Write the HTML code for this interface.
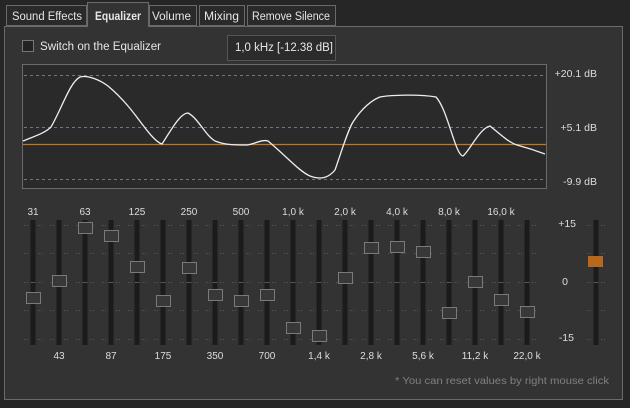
<!DOCTYPE html>
<html><head><meta charset="utf-8"><style>
html,body{margin:0;padding:0;background:#262626;width:630px;height:408px;overflow:hidden}
svg{display:block;font-family:"Liberation Sans",sans-serif}
</style></head><body>
<svg width="630" height="408" viewBox="0 0 630 408" xmlns="http://www.w3.org/2000/svg">
<rect x="4.5" y="26.5" width="618" height="373" fill="#333" stroke="#6a6a6a"/>
<g stroke="#6a6a6a">
<rect x="6.5" y="5.5" width="80" height="20" fill="#2a2a2a"/>
<rect x="149.5" y="5.5" width="47" height="20" fill="#2a2a2a"/>
<rect x="199.5" y="5.5" width="45" height="20" fill="#2a2a2a"/>
<rect x="247.5" y="5.5" width="88" height="20" fill="#2a2a2a"/>
<path d="M87.5 27V2.5H148.5V27" fill="#333"/>
</g>
<g font-size="11.5" fill="#e6e6e6" lengthAdjust="spacingAndGlyphs">
<text x="12" y="20" textLength="70" lengthAdjust="spacingAndGlyphs">Sound Effects</text>
<text x="95" y="20" font-weight="bold" textLength="46" lengthAdjust="spacingAndGlyphs">Equalizer</text>
<text x="152" y="20" textLength="39" lengthAdjust="spacingAndGlyphs">Volume</text>
<text x="204" y="20" textLength="35" lengthAdjust="spacingAndGlyphs">Mixing</text>
<text x="252" y="20" textLength="78" lengthAdjust="spacingAndGlyphs">Remove Silence</text>
</g>
<rect x="22.5" y="40.5" width="11" height="11" fill="#222" stroke="#777"/>
<text x="40" y="50" font-size="11.5" fill="#e6e6e6" textLength="121" lengthAdjust="spacingAndGlyphs">Switch on the Equalizer</text>
<rect x="22.5" y="64.5" width="524" height="124" fill="#2a2a2a" stroke="#6a6a6a"/>
<g stroke="#777" stroke-dasharray="3 3" stroke-width="1">
<line x1="24" y1="75.5" x2="545" y2="75.5"/>
<line x1="24" y1="127.5" x2="545" y2="127.5"/>
<line x1="24" y1="179.5" x2="545" y2="179.5"/>
</g>
<line x1="23" y1="144.5" x2="546" y2="144.5" stroke="#c8741c" stroke-width="1.3"/>
<path d="M23 141 C35 136 45 133 51 127 C62 108 70 82 80 77 C88 75 100 80 108 86 C120 96 130 108 136 116 C145 128 155 142 162 144 C170 132 180 113 188 113 C198 118 205 135 215 141 C225 145 235 145 247 145 C255 144 262 139 268 141 C285 155 300 172 310 176 C315 178 318 178 320 178 C325 178 330 176 335 170 C342 150 348 130 353 122 C362 108 372 100 380 97 C390 95 420 94 436 97 C448 110 455 155 463 156 C470 150 480 128 490 126 C500 134 508 142 517 145 C528 148 537 151 545 154" fill="none" stroke="#eee" stroke-width="1.3"/>
<g font-size="10.5" fill="#ddd" text-anchor="end">
<text x="597" y="77">+20.1 dB</text>
<text x="597" y="131">+5.1 dB</text>
<text x="597" y="185">-9.9 dB</text>
</g>
<rect x="227.5" y="35.5" width="108" height="25" fill="#2b2b2b" stroke="#555"/>
<text x="235" y="51" font-size="11.5" fill="#e6e6e6" textLength="98" lengthAdjust="spacingAndGlyphs">1,0 kHz [-12.38 dB]</text>
<g id="sl"></g>
<text x="395" y="384" font-size="10.5" fill="#808080" textLength="214" lengthAdjust="spacingAndGlyphs">* You can reset values by right mouse click</text>
</svg>
<script>
var g=document.getElementById('sl'),h='';
var labs=['31','43','63','87','125','175','250','350','500','700','1,0 k','1,4 k','2,0 k','2,8 k','4,0 k','5,6 k','8,0 k','11,2 k','16,0 k','22,0 k'];
var ys=[298,281,228,236,267,301,268,295,301,295,328,336,278,248,247,252,313,282,300,312];
var ticks=[225,253,282,310,339];
function col(x){var s='<rect x="'+(x-2.5)+'" y="220" width="5" height="125" fill="#1b1b1b"/><line x1="'+(x-2.5)+'" y1="282.5" x2="'+(x+2.5)+'" y2="282.5" stroke="#555"/>';
ticks.forEach(function(t){s+='<line x1="'+(x-9)+'" y1="'+(t+.5)+'" x2="'+(x-5)+'" y2="'+(t+.5)+'" stroke="#555" stroke-dasharray="1.5 1.5"/><line x1="'+(x+5)+'" y1="'+(t+.5)+'" x2="'+(x+9)+'" y2="'+(t+.5)+'" stroke="#555" stroke-dasharray="1.5 1.5"/>';});return s;}
for(var i=0;i<20;i++){var x=33+26*i;h+=col(x);
h+='<rect x="'+(x-6.5)+'" y="'+(ys[i]-5.5)+'" width="14" height="11" fill="#383838" stroke="#7a7a7a"/>';
var ty=(i%2==0)?215:359;h+='<text x="'+x+'" y="'+ty+'" font-size="10" fill="#ddd" text-anchor="middle">'+labs[i]+'</text>';}
h+=col(596);
h+='<rect x="588" y="256" width="15" height="11" fill="#b8681c"/>';
h+='<text x="576" y="227" font-size="10.5" fill="#ddd" text-anchor="end">+15</text><text x="565" y="285" font-size="10.5" fill="#ddd" text-anchor="middle">0</text><text x="574" y="341" font-size="10.5" fill="#ddd" text-anchor="end">-15</text>';
g.innerHTML=h;
</script>
</body></html>
